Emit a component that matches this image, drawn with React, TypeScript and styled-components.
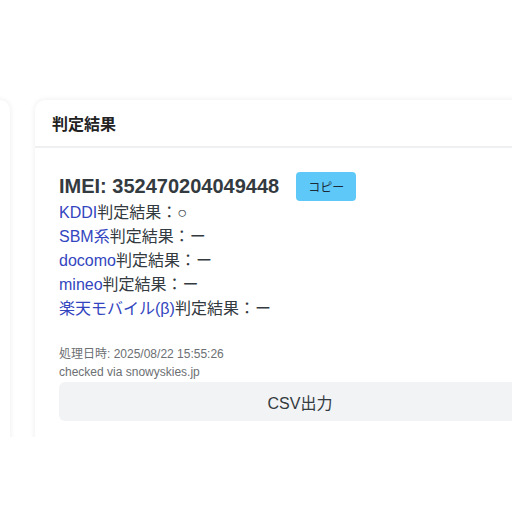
import styled, { createGlobalStyle } from 'styled-components';

const GlobalStyle = createGlobalStyle`
  html, body {
    margin: 0;
    padding: 0;
    background: #ffffff;
    overflow: hidden;
  }
  body {
    font-family: "Liberation Sans", "Noto Sans CJK JP", sans-serif;
    color: #333;
  }
`;

const colors = {
  text: '#333a40',
  link: '#3346c0',
  muted: '#6c6f73',
  copy: '#5ec9f8',
  soft: '#f2f3f5',
};

const Styled = {
  Page: styled.div`
    width: 512px;
    height: 437px;
    overflow: hidden;
    padding-top: 100px;
    box-sizing: border-box;
  `,
  Columns: styled.div`
    display: grid;
    grid-template-columns: 300px 530px;
    column-gap: 25px;
    margin-left: -290px;
  `,
  Card: styled.section`
    background: #fff;
    border-radius: 10px;
    box-shadow: 0 0 6px rgba(0, 0, 0, 0.08);
    min-height: 380px;
    display: flex;
    flex-direction: column;
  `,
  CardHeader: styled.header`
    height: 46px;
    display: flex;
    align-items: center;
    padding: 0 17px;
    border-bottom: 2px solid #eff0f2;
    font-weight: 700;
    font-size: 16px;
    color: #222;
  `,
  CardBody: styled.div`
    padding: 24px 24px 16px;
    display: flex;
    flex-direction: column;
  `,
  ImeiRow: styled.div`
    display: flex;
    align-items: center;
    gap: 17px;
    height: 29px;
  `,
  Imei: styled.h2`
    margin: 0;
    font-size: 20px;
    font-weight: 700;
    color: ${colors.text};
    line-height: 29px;
  `,
  CopyButton: styled.button`
    width: 60px;
    height: 29px;
    border: none;
    border-radius: 4px;
    background: ${colors.copy};
    color: #1b2a38;
    font-family: "Noto Sans CJK JP", sans-serif;
    font-size: 12px;
    padding: 0;
  `,
  Results: styled.ul`
    margin: 0 0 24px;
    padding: 0;
    list-style: none;
  `,
  Result: styled.li`
    font-size: 16px;
    line-height: 24px;
    height: 24px;
    color: ${colors.text};
  `,
  Carrier: styled.span`
    color: ${colors.link};
  `,
  Meta: styled.p`
    margin: 0;
    font-size: 12px;
    line-height: 18px;
    color: ${colors.muted};
  `,
  CsvButton: styled.button`
    margin-top: 1px;
    height: 39px;
    border: none;
    border-radius: 6px;
    background: ${colors.soft};
    color: ${colors.text};
    font-family: "Liberation Sans", "Noto Sans CJK JP", sans-serif;
    font-size: 16px;
  `,
};

const results = [
  { carrier: 'KDDI', mark: '○' },
  { carrier: 'SBM系', mark: 'ー' },
  { carrier: 'docomo', mark: 'ー' },
  { carrier: 'mineo', mark: 'ー' },
  { carrier: '楽天モバイル(β)', mark: 'ー' },
];

export const App = () => (
  <>
    <GlobalStyle />
    <Styled.Page>
      <Styled.Columns>
        <Styled.Card />
        <Styled.Card>
          <Styled.CardHeader>判定結果</Styled.CardHeader>
          <Styled.CardBody>
            <Styled.ImeiRow>
              <Styled.Imei>IMEI: 352470204049448</Styled.Imei>
              <Styled.CopyButton>コピー</Styled.CopyButton>
            </Styled.ImeiRow>
            <Styled.Results>
              {results.map((r) => (
                <Styled.Result key={r.carrier}>
                  <Styled.Carrier>{r.carrier}</Styled.Carrier>判定結果：{r.mark}
                </Styled.Result>
              ))}
            </Styled.Results>
            <Styled.Meta>処理日時: 2025/08/22 15:55:26</Styled.Meta>
            <Styled.Meta>checked via snowyskies.jp</Styled.Meta>
            <Styled.CsvButton>CSV出力</Styled.CsvButton>
          </Styled.CardBody>
        </Styled.Card>
      </Styled.Columns>
    </Styled.Page>
  </>
);

export default App;
